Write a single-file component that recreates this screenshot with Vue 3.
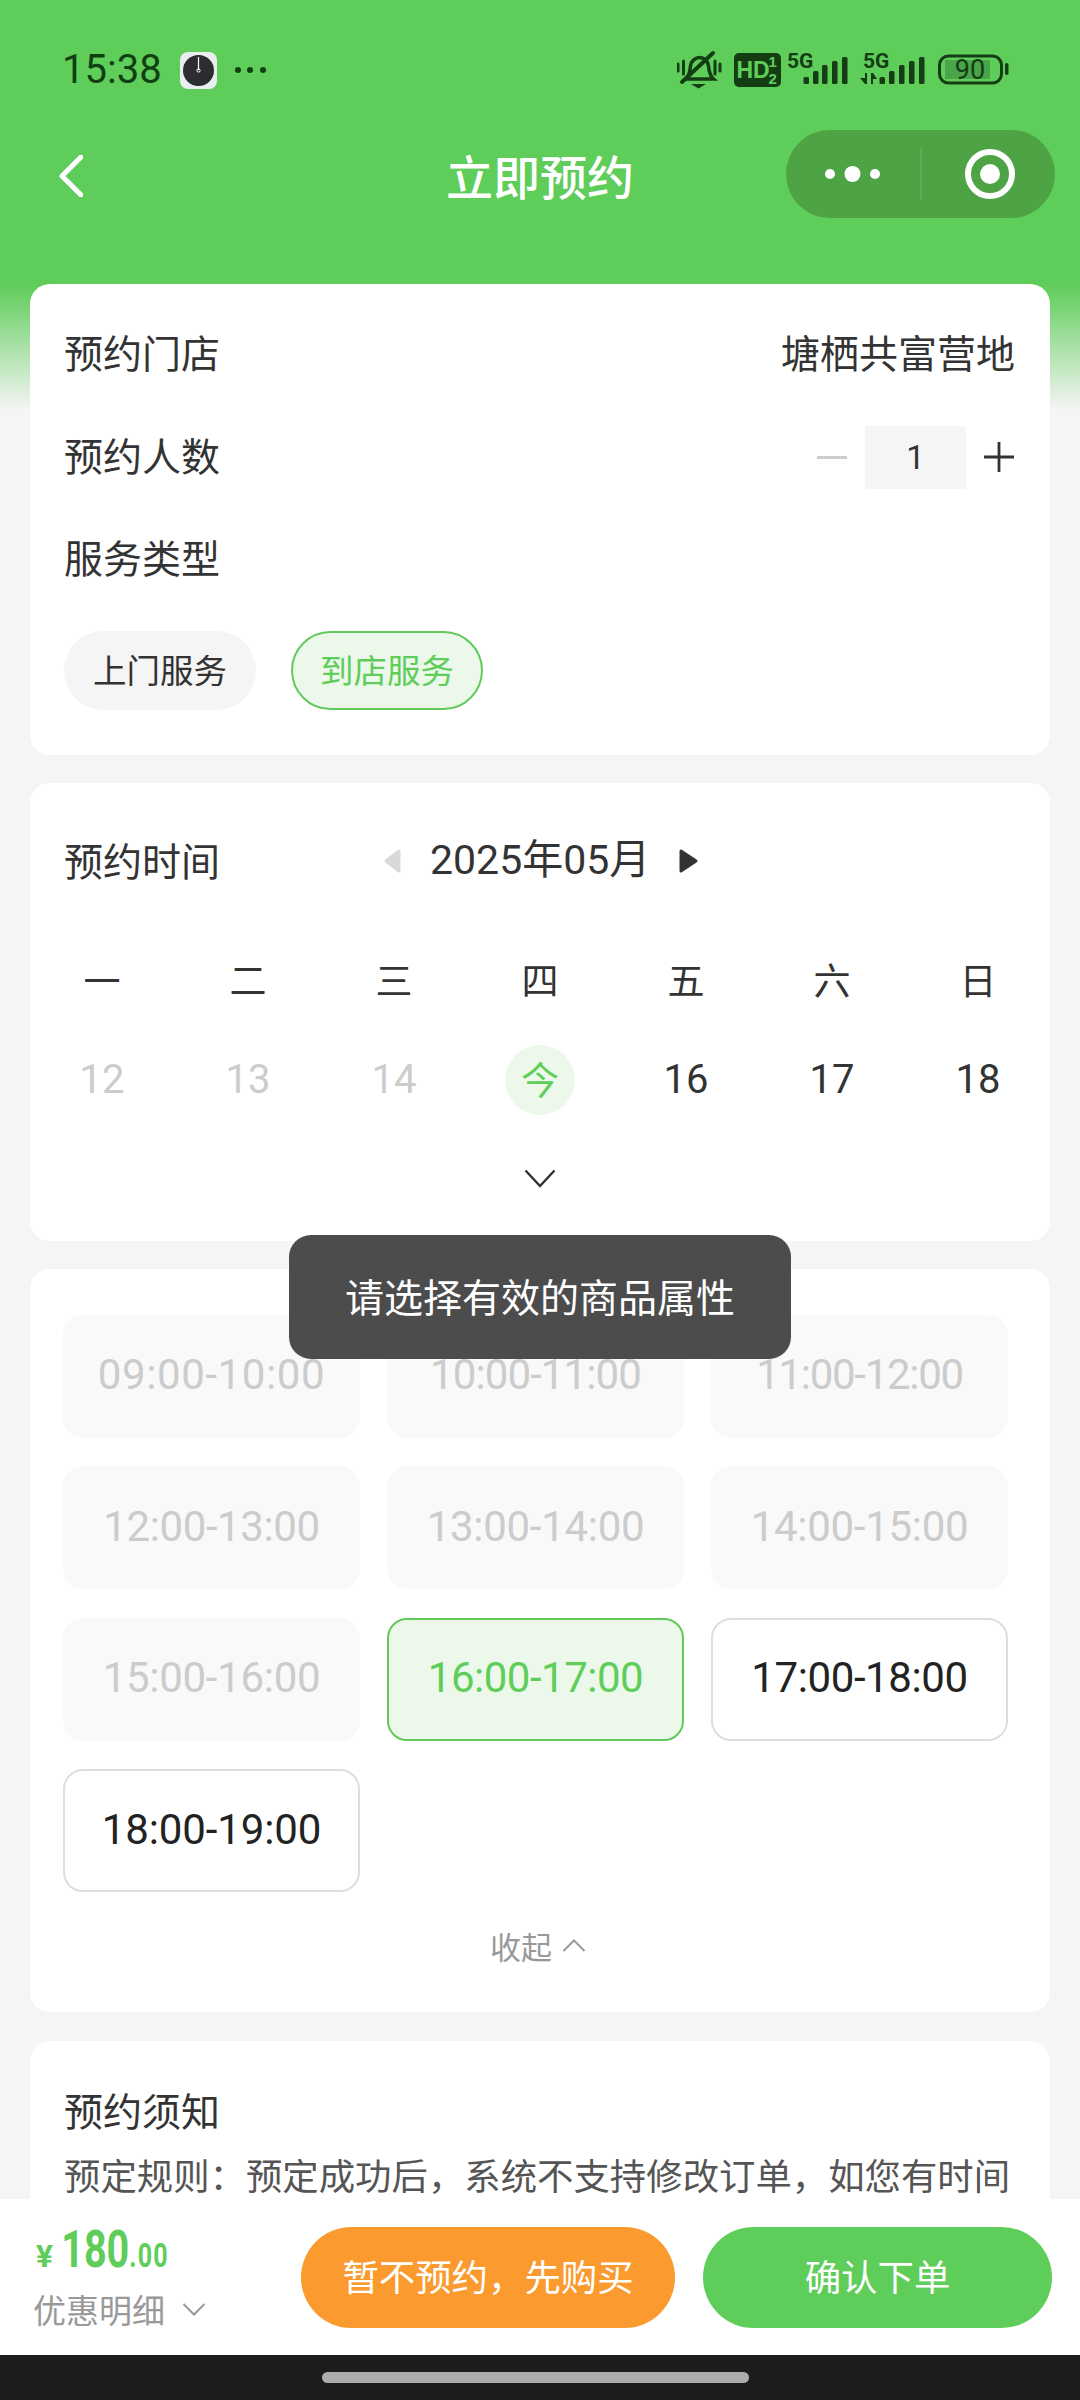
<script setup>
const weekdays = ['一', '二', '三', '四', '五', '六', '日']
const days = [
  { t: '12', c: 'off' }, { t: '13', c: 'off' }, { t: '14', c: 'off' },
  { t: '今', c: 'today' }, { t: '16', c: '' }, { t: '17', c: '' }, { t: '18', c: '' }
]
const slots = [
  { t: '09:00-10:00', c: 'off', w: 225 }, { t: '10:00-11:00', c: 'off', w: 210 }, { t: '11:00-12:00', c: 'off', w: 206 },
  { t: '12:00-13:00', c: 'off', w: 215 }, { t: '13:00-14:00', c: 'off', w: 216 }, { t: '14:00-15:00', c: 'off', w: 216 },
  { t: '15:00-16:00', c: 'off', w: 216 }, { t: '16:00-17:00', c: 'sel', w: 214 }, { t: '17:00-18:00', c: 'on', w: 215 },
  { t: '18:00-19:00', c: 'on', w: 218 }
]
const spacing = (w) => ((w - 219) / 10).toFixed(2) + 'px'
const bars1 = [[803.5, 77, 7], [813, 71, 13], [822, 65, 19], [832, 61, 23], [842, 57, 27]]
const bars2 = [[879.5, 77, 7], [889, 71, 13], [899, 65, 19], [909, 61, 23], [919, 57, 27]]
</script>

<template>
  <div class="page">
    <div class="status">
      <span class="time">15:38</span>
      <svg class="clock" viewBox="0 0 37 37" width="37" height="37">
        <rect width="37" height="37" rx="8" fill="#e9eef0" />
        <circle cx="18.5" cy="18.5" r="15.500" fill="#2b2d31" />
        <path d="M18.5 5v13" stroke="#fff" stroke-width="1.2" />
        <circle cx="18.5" cy="18.5" r="1.6" fill="none" stroke="#fff" stroke-width="1" />
      </svg>
      <svg class="more" viewBox="0 0 32 6" width="32" height="6">
        <circle cx="3" cy="3" r="3" fill="#103f12" />
        <circle cx="15" cy="3" r="3" fill="#103f12" />
        <circle cx="28" cy="3" r="3" fill="#103f12" />
      </svg>
      <svg class="sys" viewBox="677 50 335 40" width="335" height="40">
        <g fill="none" stroke="#143d14" stroke-linecap="round">
          <path d="M686 79c3-3 4-8 4.500-13 .6-5 5-8.500 9-8.500 5 0 8.500 4 9 8.500 .5 5 1.500 10 5 13z" stroke-width="3.500" />
          <path d="M682 82 713 53" stroke-width="4" />
          <path d="M678 64v7M683.500 61v13M715 61v13M720 64v7" stroke-width="3" />
        </g>
        <path d="M691 84h15l-7.500 4.500z" fill="#143d14" />
        <rect x="734" y="53" width="47" height="34" rx="5" fill="#143d14" />
        <text x="736.500" y="78" class="hd">HD</text>
        <text x="768.500" y="67" class="hdn">1</text>
        <text x="768.500" y="84" class="hdn">2</text>
        <text x="787" y="67.500" class="five">5G</text>
        <text x="863" y="67.500" class="five">5G</text>
        <g fill="#143d14">
          <rect v-for="b in bars1" :key="b[0]" :x="b[0]" :y="b[1]" width="5.500" :height="b[2]" rx="1.500" />
          <rect v-for="b in bars2" :key="b[0]" :x="b[0]" :y="b[1]" width="5.500" :height="b[2]" rx="1.500" />
          <path d="M860 78 865 78 865 73 867 73 867 84 865 84zM871 84V73h2l4 6h-4v5z" />
        </g>
        <rect x="939.500" y="56" width="62" height="27" rx="9" fill="none" stroke="#143d14" stroke-width="3" />
        <rect x="945" y="60" width="45" height="19" fill="#4aa449" />
        <rect x="1005" y="63" width="3.500" height="12" rx="1.700" fill="#143d14" />
        <text x="970" y="79" class="batt">90</text>
      </svg>
    </div>

    <div class="nav">
      <svg class="back" viewBox="0 0 25 42" width="25" height="42">
        <path d="M23 2 4 21l19 19" fill="none" stroke="#fff" stroke-width="5" stroke-linecap="round" stroke-linejoin="round" />
      </svg>
      <div class="title">立即预约</div>
      <div class="capsule-wrap">
        <div class="capsule">
          <svg viewBox="0 0 269 88" width="269" height="88">
            <circle cx="44" cy="44" r="5" fill="#fff" />
            <circle cx="66.500" cy="44" r="8" fill="#fff" />
            <circle cx="89" cy="44" r="5" fill="#fff" />
            <path d="M135 18v52" stroke="#62b558" stroke-width="1.500" />
            <circle cx="204" cy="44" r="22" fill="none" stroke="#fff" stroke-width="6" />
            <circle cx="204" cy="44" r="10" fill="#fff" />
          </svg>
        </div>
      </div>
    </div>

    <main class="main">
      <section class="card card-store">
        <div class="row"><span>预约门店</span><span>塘栖共富营地</span></div>
        <div class="row">
          <span>预约人数</span>
          <div class="stepper">
            <span class="minus"></span>
            <span class="qty">1</span>
            <svg viewBox="0 0 32 32" width="32" height="32"><path d="M16 1v30M1 16h30" stroke="#333" stroke-width="2.800" /></svg>
          </div>
        </div>
        <div class="row"><span>服务类型</span></div>
        <div class="pills">
          <span class="pill">上门服务</span>
          <span class="pill pill-on">到店服务</span>
        </div>
      </section>

      <section class="card card-date">
        <div class="date-head">
          <span class="date-title">预约时间</span>
          <svg class="tri-l" viewBox="0 0 17 24" width="17" height="24"><path d="M15 2v20L2 12z" fill="#d9d9d9" stroke="#d9d9d9" stroke-width="3" stroke-linejoin="round" /></svg>
          <span class="month">2025年05月</span>
          <svg class="tri-r" viewBox="0 0 20 24" width="20" height="24"><path d="M3 2v20l15-10z" fill="#333" stroke="#333" stroke-width="3" stroke-linejoin="round" /></svg>
        </div>
        <div class="week"><span v-for="w in weekdays" :key="w">{{ w }}</span></div>
        <div class="days">
          <span v-for="d in days" :key="d.t" class="day" :class="d.c">
            <i v-if="d.c === 'today'">{{ d.t }}</i><template v-else>{{ d.t }}</template>
          </span>
        </div>
        <svg class="down" viewBox="0 0 32 19" width="32" height="19"><path d="M1.500 1.500 16 17 30.500 1.500" fill="none" stroke="#333" stroke-width="2.500" /></svg>
      </section>

      <section class="card card-slots">
        <div class="slots">
          <div v-for="s in slots" :key="s.t" class="slot" :class="s.c" :style="{ letterSpacing: spacing(s.w) }">{{ s.t }}</div>
        </div>
        <div class="fold">
          <span>收起</span>
          <svg viewBox="0 0 24 13" width="24" height="13"><path d="M1.500 12 12 1.500 22.500 12" fill="none" stroke="#999" stroke-width="2" /></svg>
        </div>
      </section>

      <section class="card card-note">
        <div class="note-title">预约须知</div>
        <div class="note-text">预定规则：预定成功后，系统不支持修改订单，如您有时间</div>
      </section>
    </main>

    <footer class="footer">
      <div class="price-box">
        <div class="price"><span class="yen">¥</span><span class="int">180</span><span class="dec">.00</span></div>
        <div class="promo">
          <span>优惠明细</span>
          <svg viewBox="0 0 24 13" width="24" height="13"><path d="M1.500 1 12 11.500 22.500 1" fill="none" stroke="#999" stroke-width="2" /></svg>
        </div>
      </div>
      <button class="btn btn-orange">暂不预约，先购买</button>
      <button class="btn btn-green">确认下单</button>
    </footer>
    <div class="home"><span class="indicator"></span></div>

    <div class="toast">请选择有效的商品属性</div>
  </div>
</template>

<style>
html, body { margin: 0; padding: 0; }
</style>

<style scoped>
.page {
  position: relative;
  width: 1080px;
  height: 2400px;
  overflow: hidden;
  display: flex;
  flex-direction: column;
  background: linear-gradient(to bottom, #5fcd5a 0, #5fcd5a 285px, #f5f5f5 410px);
  font-family: "Noto Sans CJK SC", "Noto Sans", sans-serif;
  color: #333;
}
.status {
  height: 130px;
  box-sizing: border-box;
  padding: 50px 68px 0 62px;
  display: flex;
  align-items: flex-start;
  flex-shrink: 0;
}
.time {
  font-family: Roboto, sans-serif;
  font-size: 40px;
  line-height: 40px;
  color: #103f12;
  width: 118px;
}
.clock { margin-top: 2px; }
.more { margin: 17px 0 0 18px; }
.sys { margin-left: auto; }
.hd { font: 700 23px "Liberation Sans", sans-serif; fill: #5fcd5a; }
.hdn { font: 700 15px "Liberation Sans", sans-serif; fill: #5fcd5a; }
.five { font: 700 21px Roboto, sans-serif; fill: #143d14; }
.batt { font: 400 27px Roboto, sans-serif; fill: #143d14; text-anchor: middle; }
.nav {
  height: 88px;
  margin-bottom: 66px;
  padding: 0 25px;
  display: grid;
  grid-template-columns: 1fr auto 1fr;
  grid-template-rows: 88px;
  align-items: start;
  flex-shrink: 0;
}
.back { margin: 25px 0 0 33px; display: block; }
.title {
  color: #fff;
  font-size: 47px;
  font-weight: 500;
  height: 88px;
  line-height: 90px;
}
.capsule-wrap { display: flex; justify-content: flex-end; }
.capsule {
  width: 269px;
  height: 88px;
  border-radius: 44px;
  background: #4ea444;
}
.capsule svg { display: block; }
.main {
  flex: 1;
  min-height: 0;
  overflow: hidden;
  padding: 0 30px;
  display: flex;
  flex-direction: column;
  gap: 28px;
}
.card {
  flex-shrink: 0;
  background: #fff;
  border-radius: 20px;
  box-sizing: border-box;
}
.card-store { padding: 19px 35px 45px 34px; font-size: 39px; }
.row {
  height: 102.500px;
  box-sizing: border-box;
  padding-bottom: 5px;
  display: flex;
  justify-content: space-between;
  align-items: center;
  line-height: 1;
}
.stepper { display: flex; align-items: center; margin-top: 6px; }
.minus { width: 30px; height: 3px; background: #ccc; margin-right: 18px; }
.qty {
  width: 101px;
  height: 63px;
  background: #f5f5f5;
  font: 400 33px/63px Roboto, sans-serif;
  text-align: center;
  margin-right: 17px;
}
.stepper svg { display: block; }
.pills { display: flex; gap: 35px; margin-top: 20px; }
.pill {
  width: 192px;
  height: 79px;
  box-sizing: border-box;
  border-radius: 40px;
  background: #f5f5f5;
  font-size: 33.500px;
  line-height: 76px;
  text-align: center;
}
.pill-on {
  background: #ecf9ea;
  border: 2px solid #62c95d;
  color: #5fcd5a;
  line-height: 72px;
}
.card-date { padding: 48px 0 53px; height: 458px; }
.date-head { display: flex; align-items: center; height: 60px; padding-left: 34px; }
.date-title { font-size: 39px; width: 156px; line-height: 1; margin-top: -3px; }
.tri-l { margin-left: 164px; }
.month { margin-left: 29px; font-family: Roboto, "Noto Sans CJK SC", sans-serif; font-size: 41px; width: 217px; line-height: 1; white-space: nowrap; }
.tri-r { margin-left: 31px; }
.week, .days { display: grid; grid-template-columns: repeat(7, 146px); justify-items: center; align-items: center; margin-left: -1px; }
.week { margin-top: 58px; height: 60px; font-size: 37px; }
.days { margin-top: 36px; height: 70px; font-family: Roboto, sans-serif; font-size: 40px; }
.day.off { color: #ccc; }
.day i {
  display: block;
  width: 70px;
  height: 70px;
  border-radius: 50%;
  background: #ecf9ea;
  color: #5fcd5a;
  font: normal 38px/66px "Noto Sans CJK SC", sans-serif;
  text-align: center;
}
.down { display: block; margin: 54px auto 0; }
.card-slots { padding: 46px 43px 47px 33px; }
.slots {
  display: grid;
  grid-template-columns: repeat(3, 297px);
  grid-auto-rows: 123px;
  column-gap: 27px;
  row-gap: 28.500px;
}
.slot {
  box-sizing: border-box;
  border-radius: 20px;
  font-family: Roboto, sans-serif;
  font-size: 42px;
  padding-bottom: 3px;
  display: flex;
  align-items: center;
  justify-content: center;
}
.slot.off { background: #f9f9f9; color: #ccc; }
.slot.sel { background: #ecf9ea; border: 2px solid #62c95d; color: #5fcd5a; }
.slot.on { background: #fff; border: 2px solid #dedede; color: #222; }
.fold {
  margin-top: 33px;
  height: 40px;
  padding-left: 6px;
  display: flex;
  align-items: center;
  justify-content: center;
  gap: 10px;
  color: #999;
  font-size: 31px;
}
.card-note { margin-top: 1px; padding: 43px 34px 60px; }
.note-title { font-size: 39px; height: 50px; line-height: 50px; }
.note-text { margin-top: 20px; font-size: 36.400px; height: 40px; line-height: 40px; white-space: nowrap; color: #555; }
.footer {
  height: 156px;
  flex-shrink: 0;
  background: #fff;
  display: flex;
  align-items: center;
  gap: 28px;
  padding: 0 28px 0 33px;
  box-sizing: border-box;
}
.price-box { flex: 1; min-width: 0; }
.price {
  height: 50px;
  display: flex;
  align-items: baseline;
  line-height: 50px;
  color: #5fcd5a;
  font-family: Roboto, sans-serif;
  font-weight: 700;
  transform: scaleX(0.76);
  transform-origin: left center;
  white-space: nowrap;
}
.yen { font-size: 32px; margin-left: 4px; margin-right: 16px; display: inline-block; transform: scaleX(1.3); transform-origin: left center; }
.int { font-size: 52px; }
.dec { font-size: 33px; letter-spacing: 1.500px; }
.promo {
  margin-top: 14px;
  display: flex;
  align-items: center;
  gap: 17px;
  color: #999;
  font-size: 33px;
  line-height: 40px;
}
.btn {
  height: 101px;
  border: 0;
  border-radius: 51px;
  padding: 0 0 5px;
  color: #fff;
  font-family: inherit;
  font-size: 36.400px;
  flex-shrink: 0;
}
.btn-orange { width: 374px; background: #fb9a2e; }
.btn-green { width: 349px; background: #5fcd5a; }
.home {
  height: 45px;
  flex-shrink: 0;
  background: #1c1c1c;
  display: flex;
  justify-content: center;
  padding: 17px 9px 0 0;
  box-sizing: border-box;
}
.indicator { width: 427px; height: 11px; border-radius: 6px; background: #acacac; }
.toast {
  position: absolute;
  left: 289px;
  top: 1235px;
  width: 502px;
  height: 124px;
  box-sizing: border-box;
  padding-bottom: 5px;
  border-radius: 22px;
  background: #4c4c4c;
  color: #fff;
  font-size: 39px;
  display: flex;
  align-items: center;
  justify-content: center;
}
</style>
